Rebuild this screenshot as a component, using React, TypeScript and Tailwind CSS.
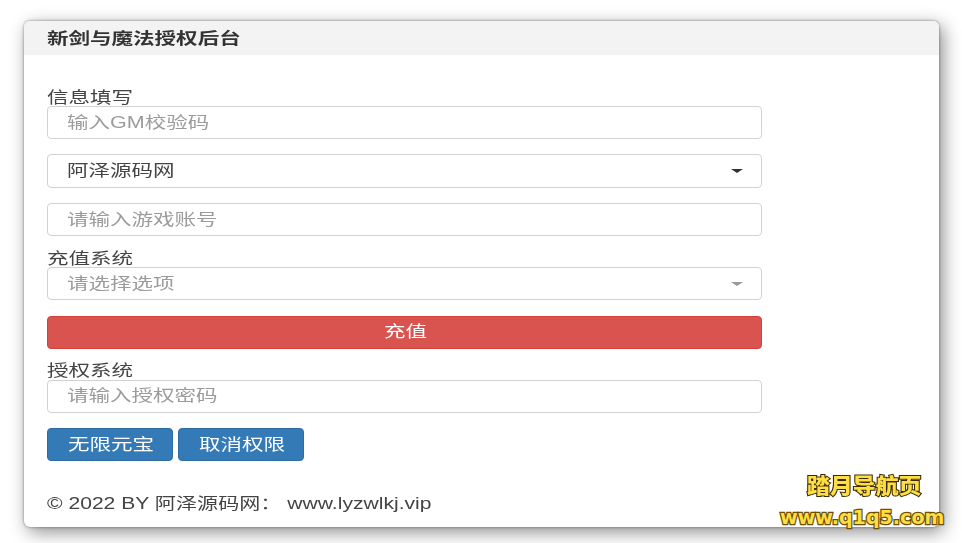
const cjk = "font-['Liberation_Sans','Noto_Sans_CJK_SC',sans-serif]";

function Wide({ children, className = "" }: { children: React.ReactNode; className?: string }) {
  return (
    <span className={`inline-block origin-left scale-x-[1.345] whitespace-nowrap ${className}`}>
      {children}
    </span>
  );
}

function Field({ text, muted = true, arrow, className = "", textClass = "-translate-y-[0.5px]" }: { text: string; muted?: boolean; arrow?: string; className?: string; textClass?: string }) {
  return (
    <div className={`flex h-[33px] w-[715px] items-center justify-between rounded-[4px] border border-[#d2d2d2] bg-white pl-[19px] pr-[18px] ${className}`}>
      <Wide className={`${textClass} text-[16px] ${muted ? "text-[#9b9b9b]" : "text-[#444444]"}`}>{text}</Wide>
      {arrow && <div className={`h-0 w-0 border-x-[6px] border-t-[4px] border-x-transparent ${arrow}`} />}
    </div>
  );
}

function Label({ text, className = "" }: { text: string; className?: string }) {
  return (
    <div className={`h-[19px] text-[16px] leading-[19px] text-[#444444] ${className}`}>
      <Wide className="translate-y-[1px]">{text}</Wide>
    </div>
  );
}

function BlueButton({ text }: { text: string }) {
  return (
    <div className="flex h-[33px] w-[126px] items-center justify-center rounded-[4px] border border-[#2e6da4] bg-[#337ab7] text-[16px] text-white">
      <Wide className="-translate-x-[10px]">{text}</Wide>
    </div>
  );
}

export default function App() {
  return (
    <div className={`relative h-[543px] w-[962px] overflow-hidden bg-white pl-[24px] pt-[21px] ${cjk}`}>
      <div className="h-[506px] w-[915px] overflow-hidden rounded-[6px] bg-white shadow-[4px_5px_18px_rgba(0,0,0,0.45),0_0_3px_rgba(0,0,0,0.45)] blur-[0.4px]">
        <div className="flex h-[34px] items-center bg-[#f3f3f3] pl-[23px] text-[16px] font-bold text-[#333333]">
          <Wide className="translate-y-[1px]">新剑与魔法授权后台</Wide>
        </div>
        <div className="pl-[23px] pt-[32px]">
          <Label text="信息填写" />
          <Field text="输入GM校验码" />
          <Field text="阿泽源码网" muted={false} arrow="border-t-[#333333]" className="mt-[15px] h-[34px]" />
          <Field text="请输入游戏账号" className="mt-[15px]" />
          <Label text="充值系统" className="mt-[12px]" />
          <Field text="请选择选项" arrow="border-t-[#999999]" />
          <div className="mt-[16px] flex h-[33px] w-[715px] items-center justify-center rounded-[4px] border border-[#d43f3a] bg-[#d9534f] text-[16px] text-white">
            <Wide className="-translate-x-[4px] -translate-y-[1px]">充值</Wide>
          </div>
          <Label text="授权系统" className="mb-[1px] mt-[11px]" />
          <Field text="请输入授权密码" textClass="-translate-y-[1px]" />
          <div className="mt-[15px] flex gap-[5px]">
            <BlueButton text="无限元宝" />
            <BlueButton text="取消权限" />
          </div>
          <div className="mt-[33px] text-[15.7px] leading-[20px] text-[#444444]">
            <Wide>© 2022 BY 阿泽源码网： www.lyzwlkj.vip</Wide>
          </div>
        </div>
      </div>
      <div className="absolute left-[807px] top-[469px] origin-left scale-x-[1.09] whitespace-nowrap font-['Noto_Sans_CJK_SC',sans-serif] text-[21px] font-black leading-[30px] text-[#ffdd44] [-webkit-text-stroke:2px_#3a2c00] [paint-order:stroke_fill]">
        踏月导航页
      </div>
      <div className="absolute left-[780px] top-[507px] whitespace-nowrap font-['DejaVu_Sans',sans-serif] text-[19.1px] font-bold leading-[22px] text-[#ffdd44] [-webkit-text-stroke:2.5px_#6a5000] [paint-order:stroke_fill]">
        www.q1q5.com
      </div>
    </div>
  );
}
